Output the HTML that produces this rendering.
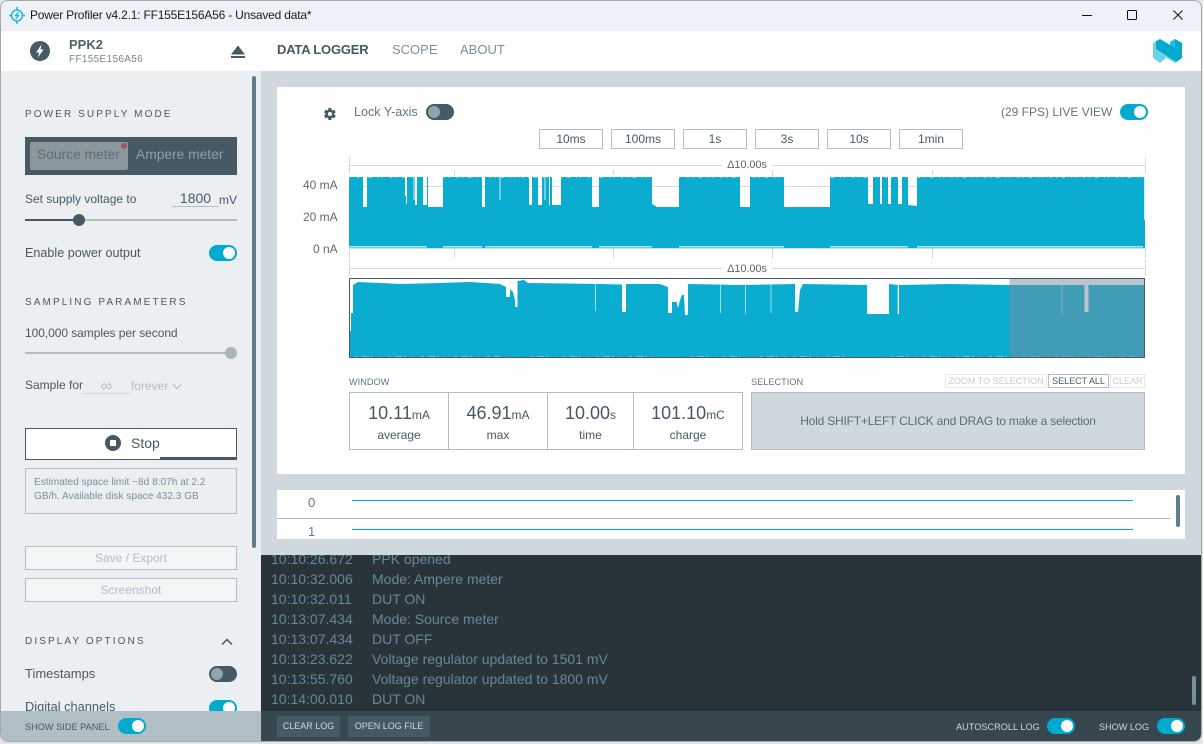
<!DOCTYPE html>
<html><head><meta charset="utf-8"><title>Power Profiler</title>
<style>
html,body{margin:0;padding:0;width:1203px;height:744px;overflow:hidden;background:#e4e4e4}
body{font-family:"Liberation Sans",sans-serif;position:relative}
#win{position:absolute;left:0;top:0;width:1202px;height:742px;border:1px solid #a8a8a8;box-sizing:border-box;border-radius:8px;overflow:hidden;background:#fff}
.a{position:absolute}
.t{position:absolute;white-space:nowrap;line-height:14px;color:#455a64}
.h{font-size:10px;letter-spacing:2.1px;color:#455a64}
.tg{position:absolute;width:28px;height:16px;border-radius:8px;background:#00a9ce}
.tg i{position:absolute;right:2px;top:2px;width:12px;height:12px;border-radius:50%;background:#fff}
.tg.off{background:#455a64}
.tg.off i{right:auto;left:2px;background:#90a4ae}
.b{position:absolute;box-sizing:border-box;border:1px solid #b0bec5;text-align:center;font-size:12px;color:#455a64;line-height:18px;background:#fff}
.d{position:absolute;box-sizing:border-box;border:1px solid #b0bec5;text-align:center;font-size:12px;color:#b0bec5;line-height:23px;background:#f3f5f7;left:24px;width:212px;height:24px}
.lg{position:absolute;font-size:14px;line-height:20px;color:#668899;white-space:nowrap}
.s{position:absolute;top:391px;height:58px;text-align:center;color:#455a64;box-sizing:border-box}
.s b{font-weight:400;font-size:18px;position:absolute;left:0;right:0;top:12px;line-height:20px}
.s b small{font-size:12px}
.s span{font-size:12px;position:absolute;left:0;right:0;top:37px;line-height:14px}
.bb{position:absolute;top:716px;height:21px;background:#455a64;color:#cfd8dc;font-size:9px;line-height:21px;text-align:center}
</style></head><body>
<div id="win" style="left:0;top:0">
<div style="position:absolute;left:-1px;top:-1px;width:1203px;height:744px">
<!-- title bar -->
<div class="a" style="left:0;top:0;width:1203px;height:31px;background:#eef2f8"></div>
<svg class="a" style="left:8px;top:6px" width="20" height="20" viewBox="0 0 20 20" fill="none" stroke="#1fb4dc" stroke-width="1.5"><circle cx="9" cy="9.5" r="5.5"/><path d="M9 1v3M9 15v3M1 9.5h2.5M14.5 9.5H17"/><path d="M10.5 6L7.5 9.5h3L7.5 13" stroke-width="1.3"/></svg>
<div class="t" style="left:30px;top:8px;font-size:12px;color:#1a1a1a;letter-spacing:-.2px">Power Profiler v4.2.1: FF155E156A56 - Unsaved data*</div>
<svg class="a" style="left:1075px;top:5px" width="125" height="20" fill="none" stroke="#111" stroke-width="1"><path d="M7 10.5h10"/><rect x="52.5" y="5.5" width="9" height="9" rx="1"/><path d="M98.500 5.500l9 9M107.500 5.500l-9 9"/></svg>
<!-- header -->
<div class="a" style="left:0;top:31px;width:1203px;height:40px;background:#fff"></div>
<svg class="a" style="left:30px;top:41px" width="20" height="20" viewBox="0 0 20 20"><circle cx="10" cy="10" r="10" fill="#455a64"/><path d="M11.500 3.500L6 11.500h3L8 16.500l5.500-8h-3z" fill="#fff"/></svg>
<div class="t" style="left:69px;top:38px;font-size:13px;font-weight:700;color:#4f636d">PPK2</div>
<div class="t" style="left:69px;top:53px;font-size:10px;letter-spacing:.33px;color:#78858c">FF155E156A56</div>
<svg class="a" style="left:231px;top:44px" width="14" height="15"><path d="M7 1.500l7 9H0z" fill="#455a64"/><rect y="12" width="14" height="2" fill="#455a64"/></svg>
<div class="t" style="left:277px;top:43px;font-size:13px;font-weight:700;letter-spacing:-.2px">DATA LOGGER</div>
<div class="t" style="left:392px;top:43px;font-size:13px;color:#78909c">SCOPE</div>
<div class="t" style="left:460px;top:43px;font-size:13px;color:#78909c">ABOUT</div>
<svg class="a" style="left:1153px;top:38px" width="30" height="26" viewBox="0 0 30 26"><path d="M0 5L7 1L17 7V4L22 1L29 5V20L22 25L12 19V21L7 25L0 20Z" fill="#6fd3e6"/><path d="M3 3.300L7 1L17 7V4L22 1L29 5V20L23.500 24L3 11Z" fill="#00a9ce"/><path d="M22 1L17 4V7L22 10Z" fill="#33bcd8"/></svg>
<!-- sidebar -->
<div class="a" style="left:0;top:71px;width:261px;height:640px;background:#eceff1"></div>
<div class="a" style="left:252px;top:76px;width:4px;height:472px;background:#607d8b;border-radius:2px"></div>
<div class="t h" style="left:25px;top:108px">POWER SUPPLY MODE</div>
<div class="a" style="left:25px;top:137px;width:212px;height:38px;background:#455a64"></div>
<div class="a" style="left:30px;top:142px;width:98px;height:28px;background:#8a979d;border-radius:2px"></div>
<div class="a" style="left:121px;top:143px;width:6px;height:6px;border-radius:50%;background:#a0565c"></div>
<div class="t" style="left:37px;top:148px;font-size:13.800px;color:#5b6e78">Source meter</div>
<div class="t" style="left:136px;top:148px;font-size:13.800px;color:#8fa1aa">Ampere meter</div>
<div class="t" style="left:25px;top:192px;font-size:12px">Set supply voltage to</div>
<div class="t" style="left:172px;top:191px;width:47px;text-align:center;font-size:14px;padding-bottom:1px;border-bottom:1px solid #b0bec5">1800</div>
<div class="t" style="left:219px;top:193px;font-size:12px">mV</div>
<div class="a" style="left:25px;top:219px;width:212px;height:2px;background:#b0bec5"></div>
<div class="a" style="left:25px;top:219px;width:54px;height:2px;background:#455a64"></div>
<div class="a" style="left:73px;top:214px;width:12px;height:12px;border-radius:50%;background:#455a64"></div>
<div class="t" style="left:25px;top:246px;font-size:12.600px">Enable power output</div>
<div class="tg" style="left:209px;top:245px"><i></i></div>
<div class="t h" style="left:25px;top:296px">SAMPLING PARAMETERS</div>
<div class="t" style="left:25px;top:326px;font-size:12px;letter-spacing:-.06px">100,000 samples per second</div>
<div class="a" style="left:25px;top:352px;width:206px;height:2px;background:#b0bec5"></div>
<div class="a" style="left:225px;top:347px;width:12px;height:12px;border-radius:50%;background:#a9b6bd"></div>
<div class="t" style="left:25px;top:378px;font-size:12px">Sample for</div>
<div class="t" style="left:83px;top:380px;width:47px;height:13px;text-align:center;font-size:16px;color:#b0bec5;border-bottom:1px solid #cfd8dc">∞</div>
<div class="t" style="left:131px;top:379px;font-size:12px;color:#b0bec5">forever</div>
<svg class="a" style="left:172px;top:383px" width="10" height="8" fill="none" stroke="#b0bec5" stroke-width="1.200"><path d="M1 1.500l4 4 4-4"/></svg>
<div class="a" style="left:25px;top:428px;width:212px;height:32px;box-sizing:border-box;border:1px solid #455a64;background:#fff"></div>
<div class="a" style="left:160px;top:457px;width:77px;height:3px;background:#455a64"></div>
<div class="a" style="left:105px;top:435px;width:16px;height:16px;border-radius:50%;background:#455a64"></div>
<div class="a" style="left:110px;top:440px;width:6px;height:6px;background:#fff"></div>
<div class="t" style="left:131px;top:436px;font-size:14px">Stop</div>
<div class="a" style="left:25px;top:468px;width:212px;height:46px;box-sizing:border-box;border:1px solid #b0bec5"></div>
<div class="t" style="left:34px;top:476px;font-size:10.100px;color:#78909c;line-height:14px">Estimated space limit ~8d 8:07h at 2.2<br>GB/h. Available disk space 432.3 GB</div>
<div class="d" style="left:25px;top:546px">Save / Export</div>
<div class="d" style="left:25px;top:578px">Screenshot</div>
<div class="t h" style="left:25px;top:635px">DISPLAY OPTIONS</div>
<svg class="a" style="left:221px;top:638px" width="12" height="8" fill="none" stroke="#455a64" stroke-width="1.500"><path d="M1 6.500l5-5 5 5"/></svg>
<div class="t" style="left:25px;top:667px;font-size:13px">Timestamps</div>
<div class="tg off" style="left:209px;top:666px"><i></i></div>
<div class="t" style="left:25px;top:700px;font-size:12.800px">Digital channels</div>
<div class="tg" style="left:209px;top:700px"><i></i></div>
<div class="a" style="left:0;top:711px;width:261px;height:33px;background:#b0bec5"></div>
<div class="t" style="left:25px;top:720px;font-size:9.200px">SHOW SIDE PANEL</div>
<div class="tg" style="left:118px;top:718px"><i></i></div>
<!-- main -->
<div class="a" style="left:261px;top:71px;width:942px;height:484px;background:#cfd8dc"></div>
<div class="a" style="left:277px;top:87px;width:908px;height:387px;background:#fff"></div>
<svg class="a" style="left:323px;top:107px" width="14" height="14" viewBox="0 0 24 24"><path fill="#455a64" d="M19.400 13c.04-.32.06-.66.06-1s-.02-.68-.07-1l2.160-1.680c.2-.15.250-.42.130-.64l-2.050-3.550c-.13-.22-.39-.3-.62-.22l-2.550 1.020c-.53-.4-1.100-.74-1.730-1l-.38-2.710C14.300 2 14.080 1.800 13.830 1.800H9.730c-.25 0-.47.2-.5.430l-.38 2.710c-.63.26-1.200.6-1.730 1L4.570 4.920c-.23-.09-.49 0-.62.22L1.900 8.680c-.13.22-.08.49.13.64L4.190 11c-.05.32-.09.660-.09 1s.03.68.08 1l-2.160 1.680c-.2.150-.250.420-.130.640l2.050 3.550c.13.22.39.3.62.22l2.550-1.020c.53.4 1.100.74 1.730 1l.38 2.710c.03.24.25.42.5.42h4.100c.25 0 .47-.18.5-.42l.38-2.710c.63-.26 1.200-.6 1.730-1l2.550 1.020c.23.09.49 0 .62-.22l2.050-3.550c.12-.22.07-.49-.13-.64zM12 15.500a3.500 3.500 0 1 1 0-7 3.500 3.500 0 0 1 0 7z"/></svg>
<div class="t" style="left:354px;top:105px;font-size:12.600px;color:#5f7784">Lock Y-axis</div>
<div class="tg off" style="left:426px;top:104px"><i></i></div>
<div class="t" style="left:1001px;top:105px;font-size:12px;color:#5f7784">(29 FPS) LIVE VIEW</div>
<div class="tg" style="left:1120px;top:104px"><i></i></div>
<div class="b" style="left:539px;top:129px;width:64px;height:20px">10ms</div>
<div class="b" style="left:611px;top:129px;width:64px;height:20px">100ms</div>
<div class="b" style="left:683px;top:129px;width:64px;height:20px">1s</div>
<div class="b" style="left:755px;top:129px;width:64px;height:20px">3s</div>
<div class="b" style="left:827px;top:129px;width:64px;height:20px">10s</div>
<div class="b" style="left:899px;top:129px;width:64px;height:20px">1min</div>
<div class="t" style="left:303px;top:178px;font-size:12px;color:#666">40 mA</div>
<div class="t" style="left:303px;top:210px;font-size:12px;color:#666">20 mA</div>
<div class="t" style="left:313px;top:242px;font-size:12px;color:#666">0 nA</div>
<div class="t" style="left:722px;top:158px;width:50px;text-align:center;font-size:11px;color:#666;letter-spacing:-.1px">Δ10.00s</div>
<div class="t" style="left:722px;top:262px;width:50px;text-align:center;font-size:11px;color:#666;letter-spacing:-.1px">Δ10.00s</div>
<svg class="a" style="left:0;top:0" width="1203" height="744" fill="none">
<g stroke="#d3dbde" stroke-width="1">
<path d="M349 165.500H722M772 165.500H1145M349 268.500H722M772 268.500H1145"/>
<path d="M349.500 157V174M1145.500 157V174M349.500 260V276M1145.500 260V276"/>
<path d="M349.500 248V258M454.500 170V258M613.500 170V258M772.500 170V258M932.500 170V258M1145.500 248V258"/>
<path d="M349 186.500H1145M349 217.500H1145M349 248.500H1145"/>
</g>
<path fill="#0aaccf" d="M349 248V177H363V207H367V177H405V196H407V177H415V205H417V177H423V205H427V177H428V207H443V177H482V207H485V177H529V205H532V177H538V205H542V177H549V205H550V177H552V205H561V177H592V207H599V177H652V204L657 207H679V177H740V207H750V177H784V207H830V177H868V204H873V177H880V204H882V177H888V204H891V177H898V204H902V177H905V177H908V205L917 206V177H1145V248Z"/>
<path d="M349 176.500H1145" stroke="#fff" stroke-width="2" stroke-dasharray="1 7 2 4 1 5 3 6 1 3"/>
<path d="M349 246.800H427M443 246.800H482M485 246.800H592M599 246.800H652M679 246.800H784M830 246.800H908M917 246.800H1143" stroke="#c9eef5" stroke-width="1.400"/>
<path d="M406.500 177V204M414 177V200M545 177V200M500 177V200M1144.500 177V220" stroke="#fff" stroke-width=".8"/>
<path fill="#0aaccf" d="M350 357V331H351V313H353V285L358 282L380 283L400 284L440 283L470 282L500 284L506 287V297H510V289L513 292L515 300V307H517.500V281L524 280L528 283L600 284V284L622 284.500V312H626V284L660 284L668 287V313H672V302H676V300L678 308L680 300L682 295H684L685 315H688V284L740 285L795 284V312L798 312L800 290L803 284L867 285V314H889V284L898 285V314H899V285L950 284L1010 285L1144 285V357Z"/>
<path d="M595.500 284V311M720.500 284V313M745.500 284V314M771 284V313M898 284V314M1062 284V314" stroke="#fff" stroke-width=".6"/>
<path d="M1086.500 285V312" stroke="#fff" stroke-width="4"/>
<path d="M355 356.300H500M530 356.300H660M690 356.300H740M760 356.300H850M890 356.300H1140" stroke="#8ed6e8" stroke-width=".7" stroke-dasharray="3 4 7 2 2 6 1 8"/>
<rect x="1009.500" y="279" width="135" height="78" fill="rgba(120,140,155,.5)"/>
<rect x="349.500" y="278.500" width="795" height="79" stroke="#455a64" stroke-width="1"/>
</svg>
<div class="t" style="left:349px;top:375px;font-size:9.200px;color:#5f7784">WINDOW</div>
<div class="a" style="left:349px;top:392px;width:394px;height:58px;box-sizing:border-box;border:1px solid #b0bec5"></div>
<div class="a" style="left:448px;top:392px;width:1px;height:58px;background:#b0bec5"></div>
<div class="a" style="left:547px;top:392px;width:1px;height:58px;background:#b0bec5"></div>
<div class="a" style="left:633px;top:392px;width:1px;height:58px;background:#b0bec5"></div>
<div class="s" style="left:350px;width:98px"><b>10.11<small>mA</small></b><span>average</span></div>
<div class="s" style="left:449px;width:98px"><b>46.91<small>mA</small></b><span>max</span></div>
<div class="s" style="left:548px;width:85px"><b>10.00<small>s</small></b><span>time</span></div>
<div class="s" style="left:634px;width:108px"><b>101.10<small>mC</small></b><span>charge</span></div>
<div class="t" style="left:751px;top:375px;font-size:9.200px;color:#5f7784">SELECTION</div>
<div class="a" style="left:945px;top:374px;width:102px;height:14px;box-sizing:border-box;border:1px solid #e3e8ea;font-size:9px;line-height:12px;text-align:center;color:#c5ced3;white-space:nowrap">ZOOM TO SELECTION</div>
<div class="a" style="left:1048px;top:374px;width:61px;height:14px;box-sizing:border-box;border:1px solid #b0bec5;font-size:9px;line-height:12px;text-align:center;color:#455a64;white-space:nowrap">SELECT ALL</div>
<div class="a" style="left:1110px;top:374px;width:35px;height:14px;box-sizing:border-box;border:1px solid #e3e8ea;font-size:9px;line-height:12px;text-align:center;color:#c5ced3">CLEAR</div>
<div class="a" style="left:751px;top:392px;width:394px;height:58px;box-sizing:border-box;border:1px solid #b0bec5;background:#cfd8dc;font-size:12px;color:#546e7a;line-height:56px;text-align:center;letter-spacing:-.2px">Hold SHIFT+LEFT CLICK and DRAG to make a selection</div>
<!-- digital -->
<div class="a" style="left:277px;top:490px;width:908px;height:49px;background:#fff"></div>
<div class="t" style="left:308px;top:496px;font-size:13px;color:#607d8b">0</div>
<div class="t" style="left:308px;top:525px;font-size:13px;color:#607d8b">1</div>
<div class="a" style="left:352px;top:500px;width:781px;height:1px;background:#00a9ce"></div>
<div class="a" style="left:352px;top:529px;width:781px;height:1px;background:#00a9ce"></div>
<div class="a" style="left:277px;top:518px;width:894px;height:1px;background:#b0bec5"></div>
<div class="a" style="left:1176px;top:495px;width:4px;height:32px;background:#607d8b;border-radius:2px"></div>
<!-- log -->
<div class="a" style="left:261px;top:555px;width:942px;height:156px;background:#29343a;overflow:hidden">
<div class="lg" style="left:10px;top:-6px">10:10:26.672<br>10:10:32.006<br>10:10:32.011<br>10:13:07.434<br>10:13:07.434<br>10:13:23.622<br>10:13:55.760<br>10:14:00.010</div>
<div class="lg" style="left:111px;top:-6px">PPK opened<br>Mode: Ampere meter<br>DUT ON<br>Mode: Source meter<br>DUT OFF<br>Voltage regulator updated to 1501 mV<br>Voltage regulator updated to 1800 mV<br>DUT ON</div>
<div class="a" style="left:931px;top:121px;width:4px;height:29px;background:#78909c;border-radius:2px"></div>
</div>
<div class="a" style="left:261px;top:711px;width:942px;height:33px;background:#37474f"></div>
<div class="bb" style="left:277px;width:63px">CLEAR LOG</div>
<div class="bb" style="left:348px;width:82px">OPEN LOG FILE</div>
<div class="t" style="left:956px;top:720px;font-size:9.200px;color:#cfd8dc">AUTOSCROLL LOG</div>
<div class="tg" style="left:1047px;top:718px"><i></i></div>
<div class="t" style="left:1099px;top:720px;font-size:9.100px;color:#cfd8dc">SHOW LOG</div>
<div class="tg" style="left:1157px;top:718px"><i></i></div>
</div>
</div>
</body></html>
